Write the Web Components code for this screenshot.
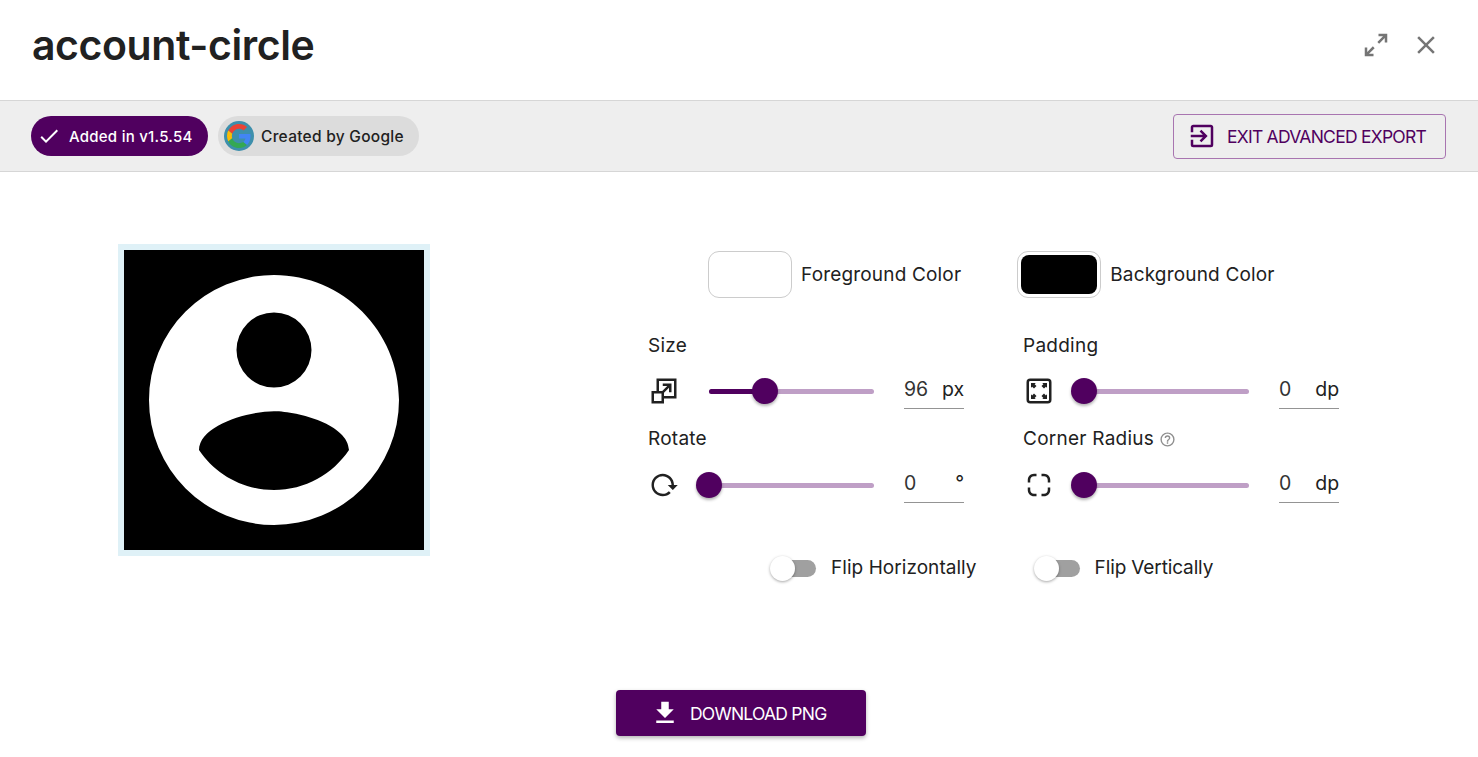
<!DOCTYPE html>
<html lang="en"><head><meta charset="utf-8"><title>account-circle</title>
<style>
html,body{margin:0;padding:0;background:#fff}
body{font-family:Inter,"Noto Sans",sans-serif;color:#212121;width:1478px;height:757px;overflow:hidden}
</style></head><body>
<export-dialog>
  <dialog-header slot="header" title-text="account-circle"></dialog-header>
  <dialog-toolbar slot="toolbar"></dialog-toolbar>
  <icon-preview slot="preview"></icon-preview>
  <export-controls slot="controls"></export-controls>
  <download-button slot="footer">DOWNLOAD PNG</download-button>
</export-dialog>
<script>
const P={
expand:"M10,21V19H6.41L10.91,14.5L9.5,13.09L5,17.59V14H3V21H10M14.5,10.91L19,6.41V10H21V3H14V5H17.59L13.09,9.5L14.5,10.91Z",
close:"M19,6.41L17.59,5L12,10.59L6.41,5L5,6.41L10.59,12L5,17.59L6.41,19L12,13.41L17.59,19L19,17.59L13.41,12L19,6.41Z",
login:"M19,3H5C3.89,3 3,3.89 3,5V9H5V5H19V19H5V15H3V19A2,2 0 0,0 5,21H19A2,2 0 0,0 21,19V5C21,3.89 20.1,3 19,3M10.08,15.58L11.5,17L16.5,12L11.5,7L10.08,8.41L12.67,11H3V13H12.67L10.08,15.58Z",
check:"M21,7L9,19L3.5,13.5L4.91,12.09L9,16.17L19.59,5.59L21,7Z",
download:"M5,20H19V18H5M19,9H15V3H9V9H5L12,16L19,9Z",
resize:"M10.59,12L14.59,8H11V6H18V13H16V9.41L12,13.41V16H20V4H8V12H10.59M22,2V18H12V22H2V12H6V2H22M10,14H4V20H10V14Z",
padding:"M5,2H19A3,3 0 0,1 22,5V19A3,3 0 0,1 19,22H5A3,3 0 0,1 2,19V5A3,3 0 0,1 5,2M5,4A1,1 0 0,0 4,5V19A1,1 0 0,0 5,20H19A1,1 0 0,0 20,19V5A1,1 0 0,0 19,4H5M5.6,5.6H9.4L8.5,6.5L10,8L8,10L6.5,8.5L5.6,9.4V5.6M18.4,5.6V9.4L17.5,8.5L16,10L14,8L15.5,6.5L14.6,5.6H18.4M5.6,18.4V14.6L6.5,15.5L8,14L10,16L8.5,17.5L9.4,18.4H5.6M18.4,18.4H14.6L15.5,17.5L14,16L16,14L17.5,15.5L18.4,14.6V18.4Z",
rotate:"M2 12C2 16.97 6.03 21 11 21C13.39 21 15.68 20.06 17.4 18.4L15.9 16.9C14.63 18.25 12.86 19 11 19C4.76 19 1.64 11.46 6.05 7.05C10.46 2.64 18 5.77 18 12H15L19 16H19.1L23 12H20C20 7.03 15.97 3 11 3C6.03 3 2 7.03 2 12Z",
radius:"M3 16C3 18.8 5.2 21 8 21H10V19H8C6.3 19 5 17.7 5 16V14H3V16M21 8C21 5.2 18.8 3 16 3H14V5H16C17.7 5 19 6.3 19 8V10H21V8M16 21C18.8 21 21 18.8 21 16V14H19V16C19 17.7 17.7 19 16 19H14V21H16M8 3C5.2 3 3 5.2 3 8V10H5V8C5 6.3 6.3 5 8 5H10V3H8Z",
help:"M11,18H13V16H11V18M12,2A10,10 0 0,0 2,12A10,10 0 0,0 12,22A10,10 0 0,0 22,12A10,10 0 0,0 12,2M12,20C7.59,20 4,16.41 4,12C4,7.59 7.59,4 12,4C16.41,4 20,7.59 20,12C20,16.41 16.41,20 12,20M12,6A4,4 0 0,0 8,10H10A2,2 0 0,1 12,8A2,2 0 0,1 14,10C14,12 11,11.75 11,15H13C13,12.75 16,12.5 16,10A4,4 0 0,0 12,6Z",
account:"M12,19.2C9.5,19.2 7.29,17.92 6,16C6.03,14 10,12.9 12,12.9C14,12.9 17.97,14 18,16C16.71,17.92 14.5,19.2 12,19.2M12,5A3,3 0 0,1 15,8A3,3 0 0,1 12,11A3,3 0 0,1 9,8A3,3 0 0,1 12,5M12,2A10,10 0 0,0 2,12A10,10 0 0,0 12,22A10,10 0 0,0 22,12C22,6.47 17.5,2 12,2Z"
};
const svg=(n,s,c="currentColor")=>`<svg width="${s}" height="${s}" viewBox="0 0 24 24" style="display:block;flex:none" aria-hidden="true"><path fill="${c}" d="${P[n]}"/></svg>`;
class Base extends HTMLElement{
  constructor(){super();this.attachShadow({mode:"open"}).innerHTML=this.markup();}
}
customElements.define("export-dialog",class extends Base{markup(){return `<style>
:host{display:block;font-family:Inter,"Noto Sans",sans-serif}
.body{display:flex;align-items:flex-start;padding:72px 0 0 118px;height:446px}
.controls{margin-left:218px}
.foot{display:flex;justify-content:center;padding-left:4px}
</style><slot name="header"></slot><slot name="toolbar"></slot>
<div class="body"><slot name="preview"></slot><div class="controls"><slot name="controls"></slot></div></div>
<div class="foot"><slot name="footer"></slot></div>`}});
customElements.define("dialog-header",class extends Base{markup(){return `<style>
:host{display:flex;align-items:center;height:100px;box-sizing:border-box;padding:0 37px 10px 32px;color:#212121}
h1{margin:0;flex:1;font:600 41px/1 Inter,sans-serif;letter-spacing:-.42px}
.b{display:flex;gap:20px;color:#757575}
.b svg{position:relative}
</style><h1>${this.getAttribute("title-text")||"account-circle"}</h1><div class="b">${svg("expand",30)}${svg("close",30)}</div>`}});
customElements.define("dialog-toolbar",class extends Base{markup(){return `<style>
:host{display:flex;align-items:center;gap:10px;height:72px;box-sizing:border-box;padding:0 32px 0 31px;background:#eee;border-top:1px solid #d6d6d6;border-bottom:1px solid #d6d6d6;font:500 15px/20px Inter,sans-serif}
.chip{display:flex;align-items:center;height:40px;border-radius:20px;box-sizing:border-box}
.chip span:last-child,.x span{padding-top:1px}
.a{background:#50005f;color:#fff;width:177px;padding-left:5.5px;gap:8.5px;letter-spacing:.25px}
.g{background:#dcdcdc;color:#212121;width:201px;padding-left:6px;gap:7px;font-size:15.5px;letter-spacing:.27px}
.av{width:30px;height:30px;border-radius:50%;background:#3d8fac;display:flex;align-items:center;justify-content:center}
.sp{flex:1}
.x{display:flex;align-items:center;gap:10px;width:273px;height:45px;box-sizing:border-box;padding-left:13px;border:1px solid #a875b0;border-radius:4px;color:#50005f;font-weight:400;font-size:17.5px;letter-spacing:-.75px}
</style><div class="chip a">${svg("check",24)}<span>Added in v1.5.54</span></div>
<div class="chip g"><span class="av"><svg width="24" height="24" viewBox="0 0 48 48" aria-hidden="true"><path fill="#EA4335" d="M24 9.5c3.5 0 6.7 1.2 9.2 3.6l6.9-6.9C35.9 2.4 30.5 0 24 0 14.6 0 6.5 5.4 2.6 13.2l8 6.2C12.4 13.7 17.7 9.5 24 9.5z"/><path fill="#4285F4" d="M47 24.5c0-1.6-.1-3.1-.4-4.5H24v9h12.9c-.6 3-2.2 5.5-4.7 7.2l7.7 6C44.4 37.9 47 31.8 47 24.5z"/><path fill="#FBBC05" d="M10.5 28.6c-.5-1.4-.8-3-.8-4.6s.3-3.2.8-4.6l-8-6.2C.9 16.5 0 20.1 0 24s.9 7.5 2.6 10.8l7.9-6.2z"/><path fill="#34A853" d="M24 48c6.5 0 11.9-2.1 15.9-5.8l-7.7-6c-2.2 1.4-4.9 2.3-8.2 2.3-6.3 0-11.6-4.2-13.5-9.9l-8 6.2C6.5 42.6 14.6 48 24 48z"/></svg></span><span>Created by Google</span></div>
<div class="sp"></div><div class="x">${svg("login",30)}<span>EXIT ADVANCED EXPORT</span></div>`}});
customElements.define("icon-preview",class extends Base{markup(){return `<style>
:host{display:block;width:300px;height:300px;border:6px solid #dff1f7;background:#000;flex:none}
</style><svg width="300" height="300" viewBox="0 0 24 24" style="display:block" aria-label="account-circle"><path fill="#fff" d="${P.account}"/></svg>`}});
customElements.define("color-swatch",class extends Base{markup(){const c=this.getAttribute("color");return `<style>
:host{display:flex;align-items:center;gap:9px;font:400 19px/24px Inter,sans-serif;letter-spacing:.17px;color:#212121}
.s{width:84px;height:47px;box-sizing:border-box;border:1px solid #ccc;border-radius:11px;padding:3px;background:#fff}
.i{height:100%;border-radius:8px;background:${c}}
</style><div class="s"><div class="i"></div></div><span><slot></slot></span>`}});
customElements.define("slider-field",class extends Base{markup(){const a=n=>this.getAttribute(n);const pct=+a("pct")||0;return `<style>
:host{display:block;width:316px;color:#212121}
.l{display:flex;align-items:center;gap:5px;height:24px;font:400 19px/24px Inter,sans-serif;letter-spacing:.25px}
.r{display:flex;align-items:center;height:46px;margin-top:var(--rm,10px);padding-left:1px}
.ic{width:30px;height:30px;display:flex;align-items:center}
.t{position:relative;width:165px;height:5px;margin-left:30px;border-radius:3px;background:#bf9fc6}
.f{height:100%;width:${pct}%;border-radius:3px;background:#50005f}
.th{position:absolute;left:${pct}%;top:50%;width:26px;height:26px;margin:-13px 0 0 -13px;border-radius:50%;background:#50005f;box-shadow:0 2px 3px rgba(0,0,0,.3)}
.v{display:flex;justify-content:space-between;align-items:flex-start;box-sizing:border-box;width:60px;height:35px;margin:0 0 0 30px;padding-top:3px;border-bottom:1px solid #949494;font:400 19.5px/24px Inter,sans-serif;letter-spacing:-.1px}
.n{color:#333}
</style><div class="l"><span>${a("label")}</span>${a("help")!==null?`<span style="color:#8d8d8d;display:block">${svg("help",17)}</span>`:""}</div>
<div class="r"><span class="ic">${svg(a("icon"),30)}</span><div class="t"><div class="f"></div><div class="th"></div></div><div class="v"><span class="n">${a("value")}</span><span>${a("unit")}</span></div></div>`}});
customElements.define("flip-toggle",class extends Base{markup(){return `<style>
:host{display:flex;align-items:center;font:400 19px/24px Inter,sans-serif;letter-spacing:var(--ls,.05px);color:#212121}
.w{position:relative;width:46px;height:17px;margin-right:15px}
.t{position:absolute;left:4px;right:0;top:0;bottom:0;border-radius:9px;background:#a0a0a0}
.k{position:absolute;left:0;top:-4px;width:25px;height:25px;border-radius:50%;background:#fff;box-shadow:0 1px 3px rgba(0,0,0,.35)}
</style><div class="w"><div class="t"></div><div class="k"></div></div><slot></slot>`}});
customElements.define("export-controls",class extends Base{markup(){return `<style>
:host{display:block;width:691px}
.c{display:flex;gap:56px;padding-left:60px;margin-top:7px}
.g{display:grid;grid-template-columns:316px 316px;column-gap:59px;row-gap:13px;margin-top:36px}
.f{display:flex;gap:57px;padding-left:122px;margin-top:48px}
.low{--rm:11px}
</style><div class="c"><color-swatch color="#fff">Foreground Color</color-swatch><color-swatch color="#000">Background Color</color-swatch></div>
<div class="g">
<slider-field label="Size" icon="resize" pct="34" value="96" unit="px"></slider-field>
<slider-field label="Padding" icon="padding" pct="0" value="0" unit="dp"></slider-field>
<slider-field class="low" label="Rotate" icon="rotate" pct="0" value="0" unit="°"></slider-field>
<slider-field class="low" label="Corner Radius" help icon="radius" pct="0" value="0" unit="dp"></slider-field>
</div>
<div class="f"><flip-toggle>Flip Horizontally</flip-toggle><flip-toggle style="--ls:-.13px">Flip Vertically</flip-toggle></div>`}});
customElements.define("download-button",class extends Base{markup(){return `<style>
:host{display:flex;align-items:center;gap:10px;width:250px;height:46px;box-sizing:border-box;padding-left:34px;border-radius:4px;background:#50005f;color:#fff;font:400 17.5px/24px Inter,sans-serif;letter-spacing:-.77px;box-shadow:0 2px 4px rgba(0,0,0,.3)}
span{padding-top:1px}
</style>${svg("download",30)}<span><slot></slot></span>`}});
</script>
</body></html>
